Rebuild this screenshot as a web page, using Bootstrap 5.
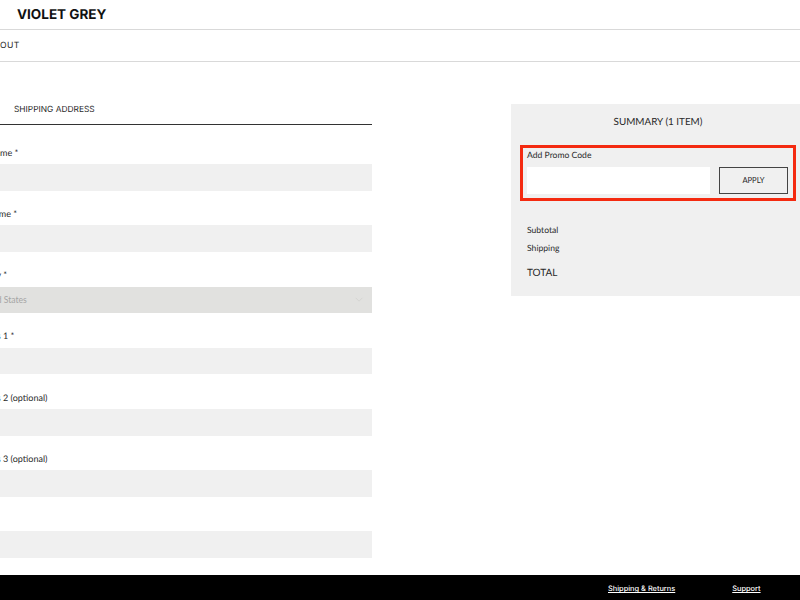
<!DOCTYPE html>
<html lang="en">
<head>
    <meta charset="UTF-8">
    <meta name="viewport" content="width=device-width, initial-scale=1.0">
    <title>Violet Grey Checkout</title>
    <link href="https://cdn.jsdelivr.net/npm/bootstrap@5.3.0/dist/css/bootstrap.min.css" rel="stylesheet">
    <style>
        html, body { height: 600px; overflow: hidden; }
        body { font-family: "Lato", "Liberation Sans", sans-serif; color: #2a2a2a; background: #fff; text-rendering: geometricPrecision; }
        .page-wrap { height: 600px; }
        .brand-bar { height: 30px; border-bottom: 1px solid #d9d9d9; padding-left: 17px; }
        .brand-name { font-family: "Inter", "Liberation Sans", sans-serif; font-weight: 700; font-size: 13.5px; color: #111; line-height: 30px; }
        .checkout-bar { height: 32px; border-bottom: 1px solid #d9d9d9; margin-left: -31px; font-family: "Inter", sans-serif; font-size: 8.6px; letter-spacing: .3px; line-height: 32px; }
        .main-area { height: 513px; }
        .form-side { width: 406px; margin-left: -34px; padding-top: 38px; flex: none; }
        .step-title { height: 25px; margin-bottom: 21.3px; border-bottom: 1px solid #333; padding-left: 48px; font-family: "Inter", sans-serif; font-size: 8.4px; line-height: 20px; }
        .field-group { height: 61.17px; }
        .field-label { font-size: 9px; line-height: 11px; padding: .6px 0 0 3px; margin-bottom: 6.4px; display: block; }
        .field-input { height: 26.6px; min-height: 0; border: 0; border-radius: 0; background-color: #f0f0f0; padding: 0 8px; font-size: 9px; }
        .field-select, .field-select:disabled { height: 26.6px; border: 0; border-radius: 0; background-color: #e1e1df; color: #a5a5a5; padding: 1px 8px 0 10px; font-size: 8.6px; background-size: 12px 9px; background-position: right 7px center; --bs-form-select-bg-img: url("data:image/svg+xml,%3csvg xmlns='http://www.w3.org/2000/svg' viewBox='0 0 16 16'%3e%3cpath fill='none' stroke='%23d2d2d0' stroke-width='1.5' d='m2 5 6 6 6-6'/%3e%3c/svg%3e"); }
        .summary-box { width: 289px; margin-left: 139px; margin-top: 42px; height: 192px; background: #f0f0f0; padding: 0 4px 0 9px; flex: none; }
        .summary-title { height: 41px; font-size: 9.9px; line-height: 36px; text-align: center; }
        .promo-frame { width: 276px; height: 56px; border: 3px solid #f42a10; padding: 2px 5px 0 4px; margin-bottom: 23px; }
        .promo-label { font-size: 8.6px; line-height: 11px; margin-bottom: 6px; display: block; }
        .promo-input { width: 183px; height: 27px; min-height: 0; border: 0; border-radius: 0; background: #fff; padding: 0 6px; font-size: 9px; }
        .apply-btn { width: 69px; height: 27px; border: 1px solid #444; border-radius: 0; background: transparent; padding: 0; font-size: 7.6px; color: #2a2a2a; }
        .total-line { font-size: 8.6px; line-height: 12px; margin: 0 0 6px 7px; }
        .grand-total { font-size: 10px; line-height: 14px; margin: 12px 0 0 7px; }
        .foot-bar { height: 25px; background: #000; padding: 3px 0 0 608px; gap: 57px; }
        .foot-bar a { color: #fff; font-family: "Inter", sans-serif; font-size: 7.4px; font-weight: 500; }
    </style>
</head>
<body>
    <div class="page-wrap d-flex flex-column">
        <div class="brand-bar"><span class="brand-name">VIOLET GREY</span></div>
        <div class="checkout-bar">CHECKOUT</div>

        <div class="main-area d-flex">
            <!-- Shipping form, left edge runs off the window -->
            <form class="form-side">
                <div class="step-title">SHIPPING ADDRESS</div>
                <div class="field-group">
                    <label class="field-label">First Name *</label>
                    <input type="text" class="form-control field-input">
                </div>
                <div class="field-group">
                    <label class="field-label">Last Name *</label>
                    <input type="text" class="form-control field-input">
                </div>
                <div class="field-group">
                    <label class="field-label">Country *</label>
                    <select class="form-select field-select" disabled>
                        <option>United States</option>
                    </select>
                </div>
                <div class="field-group">
                    <label class="field-label">Address 1 *</label>
                    <input type="text" class="form-control field-input">
                </div>
                <div class="field-group">
                    <label class="field-label">Address 2 (optional)</label>
                    <input type="text" class="form-control field-input">
                </div>
                <div class="field-group">
                    <label class="field-label">Address 3 (optional)</label>
                    <input type="text" class="form-control field-input">
                </div>
                <div class="field-group">
                    <label class="field-label">City</label>
                    <input type="text" class="form-control field-input">
                </div>
            </form>

            <!-- Order summary -->
            <div class="summary-box">
                <div class="summary-title">SUMMARY (1 ITEM)</div>
                <div class="promo-frame">
                    <label class="promo-label">Add Promo Code</label>
                    <div class="d-flex justify-content-between">
                        <input type="text" class="form-control promo-input">
                        <button type="button" class="btn apply-btn">APPLY</button>
                    </div>
                </div>
                <div class="total-line">Subtotal</div>
                <div class="total-line">Shipping</div>
                <div class="grand-total">TOTAL</div>
            </div>
        </div>

        <div class="foot-bar d-flex align-items-center">
            <a href="#">Shipping &amp; Returns</a>
            <a href="#">Support</a>
        </div>
    </div>
    <script src="https://cdn.jsdelivr.net/npm/bootstrap@5.3.0/dist/js/bootstrap.bundle.min.js"></script>
</body>
</html>
